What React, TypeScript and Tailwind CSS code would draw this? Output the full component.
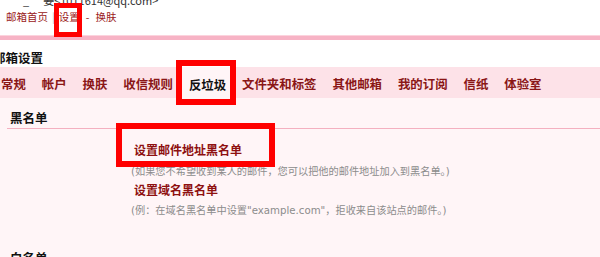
import React from 'react';

const tabs = ['常规', '帐户', '换肤', '收信规则', '反垃圾', '文件夹和标签', '其他邮箱', '我的订阅', '信纸', '体验室'];

const grayFont = { fontFamily: '"DejaVu Sans", "Noto Sans CJK SC", sans-serif' };

export default function App() {
  return (
    <div
      className="relative w-[600px] h-[257px] overflow-hidden bg-white flex flex-col"
      style={{ fontFamily: '"Noto Sans CJK SC", "Noto Sans", sans-serif' }}
    >
      {/* Header */}
      <div className="h-[35px] shrink-0 flex flex-col">
        <div className="mt-[-6px] h-[12px] flex items-center text-[11px] leading-[12px] text-[#333]">
          <span className="ml-[23px]">_</span>
          <span className="ml-[14px]">姜</span>
          <span>&lt;1011614@qq.com&gt;</span>
        </div>
        <div className="mt-[4px] flex items-center text-[10.5px] leading-[14px] text-[#9a2020] whitespace-nowrap">
          <span className="ml-[6px]">邮箱首页</span>
          <span className="mx-[4px] text-[#bbb]">|</span>
          <span>设置</span>
          <span className="mx-[6px]">-</span>
          <span>换肤</span>
        </div>
      </div>
      <div className="h-px shrink-0 bg-[#fcd3dd]" />
      <div className="h-[4px] shrink-0 bg-[#f7b3c5]" />

      {/* Title */}
      <div className="mt-[10px] ml-[-7px] h-[16px] shrink-0 text-[12.5px] leading-[16px] font-bold text-[#111]">
        邮箱设置
      </div>

      {/* Tabs */}
      <div className="mt-[1px] h-[31px] shrink-0 bg-[#fde2e8] flex items-stretch">
        <div className="flex items-stretch ml-[-7px]">
          {tabs.map((t) =>
            t === '反垃圾' ? (
              <div
                key={t}
                className="px-[8px] pt-[5px] flex items-center bg-[#fff5f7] text-[12.4px] font-bold text-[#111] whitespace-nowrap"
              >
                {t}
              </div>
            ) : (
              <div
                key={t}
                className="px-[8px] pt-[3px] flex items-center text-[12.4px] font-bold text-[#8a1616] whitespace-nowrap"
              >
                {t}
              </div>
            )
          )}
        </div>
      </div>

      {/* Content */}
      <div className="bg-[#fff5f7] grow flex flex-col">
        <div className="pt-[12px] ml-[7px] pl-[3px] pb-[2px] border-b border-[#f4b0c0] text-[12.5px] leading-[16px] font-bold text-[#111]">
          黑名单
        </div>
        <div className="pl-[131px] flex flex-col">
          <div className="mt-[12.5px] pl-[3px] text-[12px] leading-[16px] font-bold text-[#8e1010]">
            设置邮件地址黑名单
          </div>
          <div className="mt-[7.5px] text-[10.2px] leading-[14px] text-[#8c8c8c] whitespace-nowrap" style={grayFont}>
            (如果您不希望收到某人的邮件，您可以把他的邮件地址加入到黑名单。)
          </div>
          <div className="mt-[2.5px] pl-[3px] text-[12px] leading-[16px] font-bold text-[#8e1010]">
            设置域名黑名单
          </div>
          <div className="mt-[6.5px] text-[10.2px] leading-[14px] text-[#8c8c8c] whitespace-nowrap" style={grayFont}>
            (例：在域名黑名单中设置"example.com"，拒收来自该站点的邮件。)
          </div>
        </div>
        <div className="mt-[32px] ml-[10px] text-[12.5px] leading-[16px] font-bold text-[#111]">
          白名单
        </div>
      </div>

      {/* Red annotation boxes */}
      <div className="absolute left-[54px] top-[3px] w-[28px] h-[34px] border-[5px] border-[#ff0000]" />
      <div className="absolute left-[176px] top-[60px] w-[60px] h-[45px] border-[6px] border-[#ff0000]" />
      <div className="absolute left-[116px] top-[123px] w-[159px] h-[44px] border-[6px] border-[#ff0000]" />
    </div>
  );
}
